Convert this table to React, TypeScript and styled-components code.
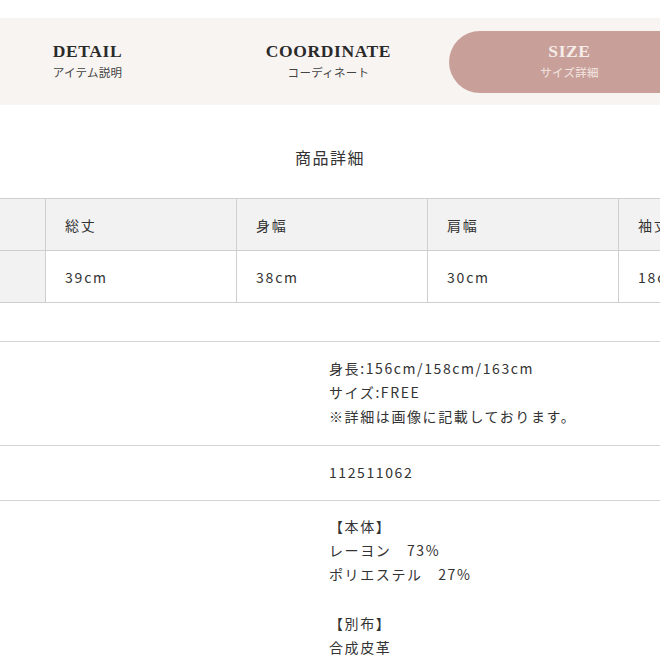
import React from 'react'
import styled, { createGlobalStyle } from 'styled-components'

const GlobalStyle = createGlobalStyle`
  html, body {
    margin: 0;
    padding: 0;
    background: #ffffff;
    overflow-x: hidden;
  }
  body {
    font-family: 'Noto Sans CJK JP', 'Noto Sans', sans-serif;
    color: #333333;
  }
`

interface TabItem {
  en: string
  ja: string
  active?: boolean
}

const tabs: TabItem[] = [
  { en: 'DETAIL', ja: 'アイテム説明' },
  { en: 'COORDINATE', ja: 'コーディネート' },
  { en: 'SIZE', ja: 'サイズ詳細', active: true }
]

const sizeHeaders = ['', '総丈', '身幅', '肩幅', '袖丈']
const sizeValues = ['', '39cm', '38cm', '30cm', '18cm']

const specs: { label: string; lines: string[] }[] = [
  {
    label: 'モデル着用サイズ',
    lines: ['身長:156cm/158cm/163cm', 'サイズ:FREE', '※詳細は画像に記載しております。']
  },
  { label: '品番', lines: ['112511062'] },
  {
    label: '素材',
    lines: ['【本体】', 'レーヨン　73%', 'ポリエステル　27%', '', '【別布】', '合成皮革']
  }
]

const App: React.FC = () => {
  return (
    <Page>
      <GlobalStyle />
      <TabBar>
        <TabTrack>
          {tabs.map((tab) => (
            <Tab key={tab.en} active={!!tab.active}>
              <TabTitle active={!!tab.active}>{tab.en}</TabTitle>
              <TabSub active={!!tab.active}>{tab.ja}</TabSub>
            </Tab>
          ))}
        </TabTrack>
      </TabBar>

      <SectionTitle>商品詳細</SectionTitle>

      {/* 左端の列は画面外にはみ出している */}
      <SizeTable>
        {sizeHeaders.map((h, i) => (
          <SizeCell key={'h' + i} head side={i === 0}>
            {h}
          </SizeCell>
        ))}
        {sizeValues.map((v, i) => (
          <SizeCell key={'v' + i} side={i === 0}>
            {v}
          </SizeCell>
        ))}
      </SizeTable>

      <SpecList>
        {specs.map((spec) => (
          <SpecRow key={spec.label}>
            <SpecLabel aria-label={spec.label} />
            <SpecValue>
              {spec.lines.map((line, i) => (
                <SpecLine key={i}>{line || '\u00a0'}</SpecLine>
              ))}
            </SpecValue>
          </SpecRow>
        ))}
      </SpecList>
    </Page>
  )
}

const Page = styled.div`
  width: 660px;
  padding-top: 18px;
  overflow: hidden;
`

const TabBar = styled.div`
  background: #f8f4f2;
  height: 87px;
  padding: 13px 0 12px;
  box-sizing: border-box;
`

const TabTrack = styled.div`
  display: flex;
  margin-left: -33px;
  width: 723px;
`

const Tab = styled.div<{ active: boolean }>`
  width: 241px;
  height: 62px;
  flex: none;
  display: flex;
  flex-direction: column;
  align-items: center;
  padding-top: 10px;
  box-sizing: border-box;
  border-radius: 31px;
  background: ${(p) => (p.active ? '#c8a099' : 'transparent')};
`

const TabTitle = styled.div<{ active: boolean }>`
  font-family: 'Liberation Serif', 'DejaVu Serif', serif;
  font-weight: 700;
  font-size: 17.5px;
  line-height: 20px;
  letter-spacing: 0.6px;
  color: ${(p) => (p.active ? '#f6ece9' : '#2a2a2a')};
`

const TabSub = styled.div<{ active: boolean }>`
  margin-top: 3px;
  font-size: 11.5px;
  line-height: 16px;
  letter-spacing: 0.3px;
  color: ${(p) => (p.active ? '#f3e6e2' : '#444444')};
`

const SectionTitle = styled.h2`
  margin: 40px 0 29px;
  text-align: center;
  font-size: 16px;
  font-weight: 400;
  line-height: 24px;
  letter-spacing: 1.5px;
  color: #333333;
`

const SizeTable = styled.div`
  display: grid;
  grid-template-columns: 46px repeat(4, 191px);
  width: 810px;
  border-top: 1px solid #cfcfcf;
`

const SizeCell = styled.div<{ head?: boolean; side?: boolean }>`
  height: 52px;
  box-sizing: border-box;
  display: flex;
  align-items: center;
  padding-left: 19px;
  border-right: 1px solid #cfcfcf;
  border-bottom: 1px solid #cfcfcf;
  background: ${(p) => (p.head || p.side ? '#f2f2f2' : '#ffffff')};
  font-size: 14px;
  letter-spacing: 1.8px;
  color: #333333;
  white-space: nowrap;
`

const SpecList = styled.div`
  margin-top: 38px;
  border-top: 1px solid #d4d4d4;
`

const SpecRow = styled.div`
  display: grid;
  grid-template-columns: 329px 1fr;
  padding: 14px 0 16px;
  border-bottom: 1px solid #d4d4d4;

  &:last-child {
    padding-top: 13px;
    border-bottom: none;
  }
`

const SpecLabel = styled.div``

const SpecValue = styled.div`
  display: flex;
  flex-direction: column;
`

const SpecLine = styled.div`
  font-size: 14px;
  line-height: 24.2px;
  letter-spacing: 1.6px;
  color: #333333;
  white-space: nowrap;
`

export default App
